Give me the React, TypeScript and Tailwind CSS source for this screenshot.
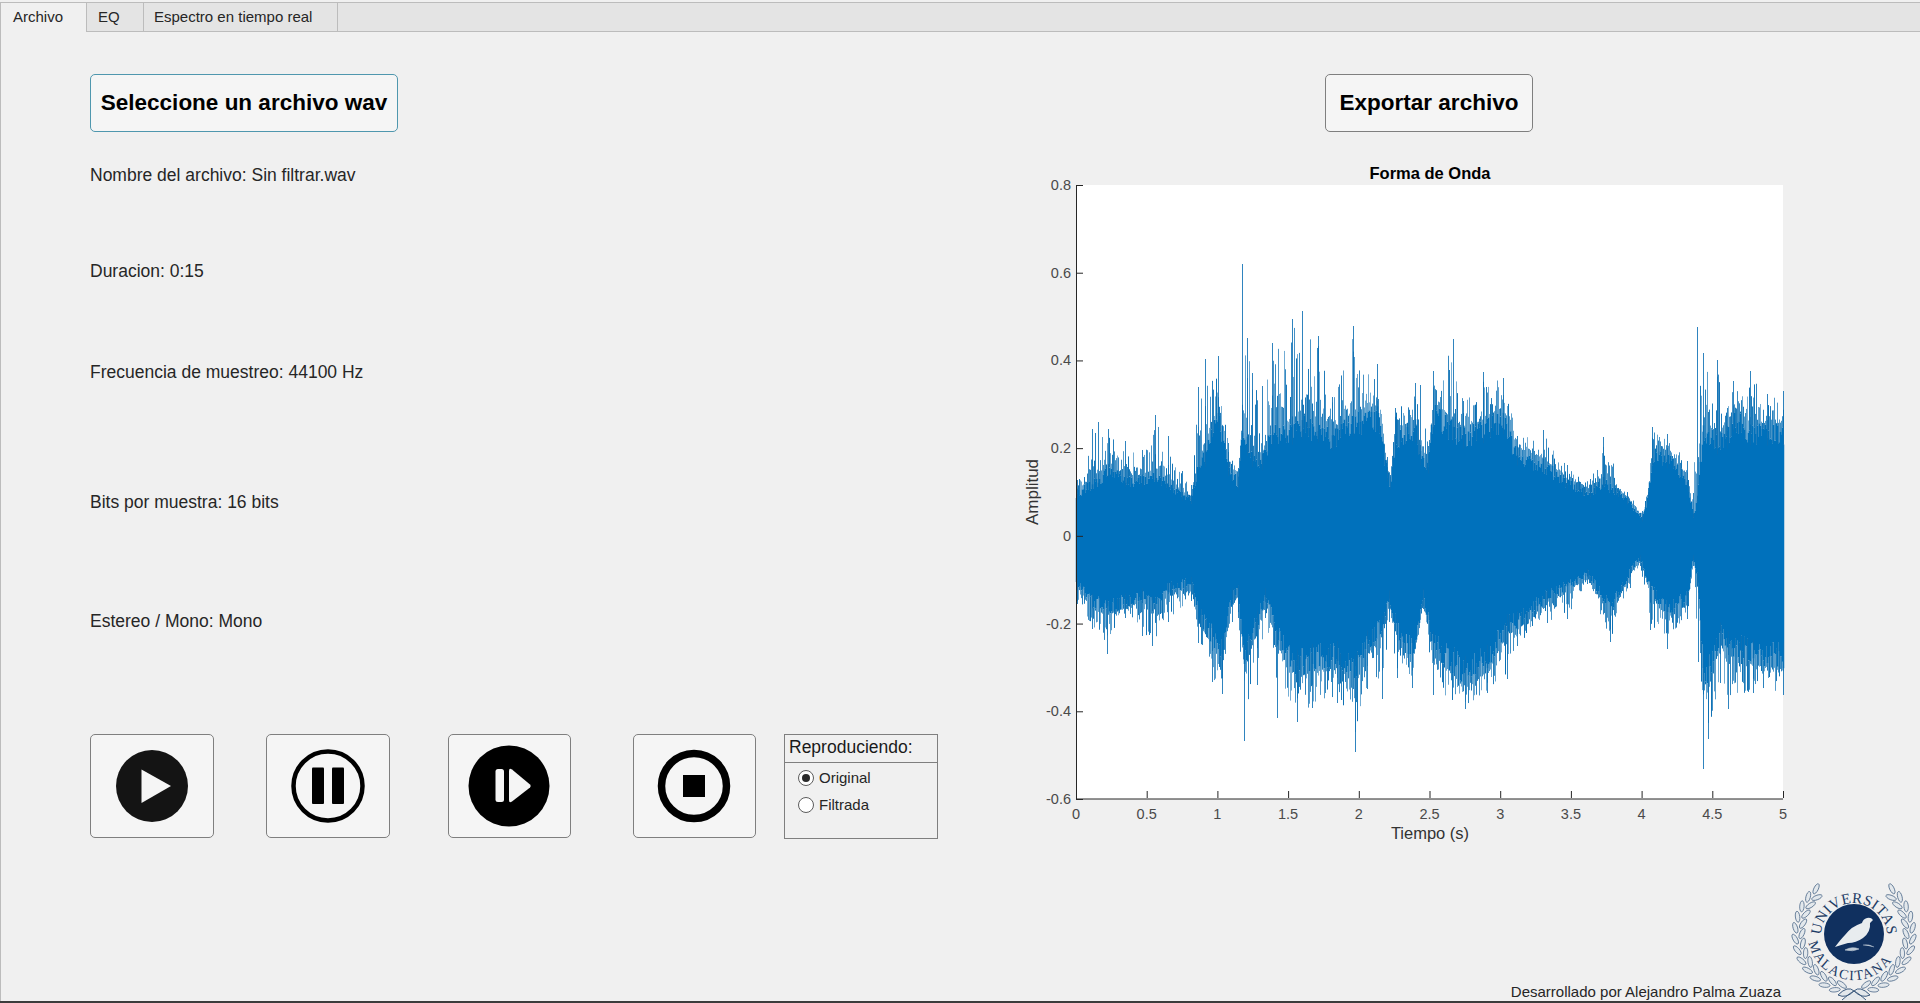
import { useMemo } from "react";

type Point = [number, number, number];

// px from DATA_X, solid edge, tallest spike (px from the zero line)
const upper: Point[] = [
  [0, 40, 50], [5, 47, 56], [20, 58, 107], [26, 61, 114], [36, 72, 107], [53, 61, 95], [70, 61, 86], [83, 68, 121],
  [96, 58, 100], [110, 44, 65], [119, 40, 51], [126, 79, 149], [133, 86, 177], [146, 135, 180], [156, 75, 93],
  [166, 58, 68], [170, 120, 272], [175, 100, 198], [180, 86, 163], [190, 82, 150], [200, 114, 193], [220, 114, 217],
  [230, 121, 225], [246, 117, 200], [260, 107, 139], [281, 124, 210], [305, 131, 172], [315, 68, 79], [318, 58, 61],
  [323, 107, 128], [343, 117, 153], [348, 88, 151], [356, 78, 90], [361, 134, 165], [381, 116, 197], [391, 109, 135],
  [411, 116, 164], [431, 127, 158], [445, 88, 100], [471, 78, 106], [495, 57, 71], [518, 46, 57], [531, 60, 99],
  [555, 39, 44], [570, 18, 25], [576, 43, 48], [580, 88, 109], [595, 85, 102], [615, 60, 75], [621, 22, 43],
  [625, 40, 209], [631, 116, 183], [645, 102, 176], [655, 109, 128], [661, 130, 155], [678, 113, 165], [695, 113, 142],
  [711, 113, 145],
];

const lower: Point[] = [
  [0, 45, 68], [5, 51, 68], [20, 72, 93], [35, 79, 118], [53, 72, 82], [70, 65, 100], [80, 75, 110], [96, 58, 86],
  [119, 51, 65], [126, 86, 107], [140, 110, 146], [150, 125, 158], [160, 65, 86], [166, 61, 82], [172, 135, 205],
  [185, 93, 149], [193, 65, 82], [205, 110, 182], [225, 142, 186], [240, 135, 172], [265, 131, 167], [283, 149, 216],
  [295, 118, 153], [310, 100, 163], [317, 68, 86], [325, 103, 142], [340, 129, 152], [351, 66, 73], [361, 119, 159],
  [393, 150, 173], [415, 136, 157], [435, 98, 143], [445, 94, 110], [475, 66, 87], [495, 55, 83], [515, 41, 48],
  [538, 80, 106], [558, 38, 52], [568, 24, 30], [578, 59, 94], [595, 80, 113], [615, 69, 83], [621, 24, 30],
  [626, 50, 126], [631, 143, 233], [636, 150, 203], [648, 108, 147], [656, 119, 173], [681, 129, 157], [711, 133, 159],
];

const interp = (points: Point[], x: number, i: 1 | 2) => {
  for (let k = 1; k < points.length; k++) {
    if (x <= points[k][0]) {
      const a = points[k - 1];
      const b = points[k];
      return a[i] + ((b[i] - a[i]) * (x - a[0])) / (b[0] - a[0]);
    }
  }
  return points[points.length - 1][i];
};

const DATA_X = 1072;
const AXIS_X = 1076;
const AXIS_W = 707;
const ZERO_Y = 536;

function Waveform() {
  const { solid, spikes } = useMemo(() => {
    let seed = 20417;
    const rand = () => {
      seed = (seed * 16807) % 2147483647;
      return seed / 2147483647;
    };
    let solid = "";
    const spikes: { x: number; y1: number; y2: number; o: number }[] = [];
    for (let px = 4; px <= 711; px++) {
      const x = DATA_X + px + 0.5;
      const sTop = interp(upper, px, 1);
      const sBot = interp(lower, px, 1);
      const top = sTop * (0.8 + rand() * 0.2);
      const bot = sBot * (0.8 + rand() * 0.2);
      solid += `M${x} ${ZERO_Y - top}V${ZERO_Y + bot}`;
      const h1 = sTop + (interp(upper, px, 2) - sTop) * rand() ** 2 * 0.9;
      spikes.push({ x, y1: ZERO_Y - top, y2: ZERO_Y - h1, o: 0.55 + rand() * 0.45 });
      const h2 = sBot + (interp(lower, px, 2) - sBot) * rand() ** 2 * 0.9;
      spikes.push({ x, y1: ZERO_Y + bot, y2: ZERO_Y + h2, o: 0.55 + rand() * 0.45 });
    }
    // the measured peaks go in exactly
    upper.forEach(([px, s, p]) => px >= 4 && spikes.push({ x: DATA_X + px + 0.5, y1: ZERO_Y - s * 0.8, y2: ZERO_Y - p, o: 0.85 }));
    lower.forEach(([px, s, p]) => px >= 4 && spikes.push({ x: DATA_X + px + 0.5, y1: ZERO_Y + s * 0.8, y2: ZERO_Y + p, o: 0.85 }));
    return { solid, spikes };
  }, []);

  return (
    <g>
      <path d={solid} stroke="#0071bc" strokeWidth={1.5} fill="none" />
      {spikes.map((s, i) => (
        <line key={i} x1={s.x} x2={s.x} y1={s.y1} y2={s.y2} stroke="#0a6fb4" strokeOpacity={s.o} strokeWidth={1} />
      ))}
    </g>
  );
}

const yTicks = ["0.8", "0.6", "0.4", "0.2", "0", "-0.2", "-0.4", "-0.6"];
const xTicks = ["0", "0.5", "1", "1.5", "2", "2.5", "3", "3.5", "4", "4.5", "5"];

function Chart() {
  const yAt = (i: number) => 185 + (i * 614) / 7;
  const xAt = (i: number) => AXIS_X + (i * AXIS_W) / 10;
  return (
    <svg viewBox="1020 150 780 700" className="w-[780px] h-[700px] mt-[18px] block shrink-0">
      <rect x={AXIS_X} y={185} width={AXIS_W} height={614} fill="#ffffff" />
      <Waveform />
      <path d={`M${AXIS_X + 0.5} 185V799H${AXIS_X + AXIS_W}`} stroke="#262626" strokeWidth={1} fill="none" />
      {yTicks.map((label, i) => (
        <g key={label}>
          <line x1={AXIS_X} x2={AXIS_X + 7} y1={yAt(i) + 0.5} y2={yAt(i) + 0.5} stroke="#262626" />
          <text x={1071} y={yAt(i) + 5} textAnchor="end" fontSize={14.5} fill="#4a4a4a">{label}</text>
        </g>
      ))}
      {xTicks.map((label, i) => (
        <g key={label}>
          <line x1={xAt(i) + 0.5} x2={xAt(i) + 0.5} y1={798} y2={791} stroke="#262626" />
          <text x={xAt(i)} y={819} textAnchor="middle" fontSize={14.5} fill="#4a4a4a">{label}</text>
        </g>
      ))}
      <text x={1430} y={179} textAnchor="middle" fontSize={16.5} fontWeight={700} fill="#000000">Forma de Onda</text>
      <text x={1430} y={839} textAnchor="middle" fontSize={16.5} fill="#333333">Tiempo (s)</text>
      <text transform="translate(1038 492) rotate(-90)" textAnchor="middle" fontSize={17} fill="#333333">Amplitud</text>
    </svg>
  );
}

function PlayIcon() {
  return (
    <svg viewBox="0 0 80 80" className="w-20 h-20">
      <circle cx="40" cy="40" r="36" fill="#141414" />
      <path d="M29.5 23.5L59 40L29.5 57Z" fill="#f5f5f5" />
    </svg>
  );
}

function PauseIcon() {
  return (
    <svg viewBox="0 0 80 80" className="w-20 h-20">
      <circle cx="40" cy="40" r="34.5" fill="none" stroke="#000000" strokeWidth="4.5" />
      <rect x="24" y="21.5" width="12" height="36.5" rx="1" fill="#000000" />
      <rect x="44" y="21.5" width="12" height="36.5" rx="1" fill="#000000" />
    </svg>
  );
}

function StepIcon() {
  return (
    <svg viewBox="0 0 84 84" className="w-[84px] h-[84px]">
      <circle cx="42" cy="42" r="40.5" fill="#000000" />
      <rect x="28.5" y="25" width="8.5" height="33" rx="2.5" fill="#f5f5f5" />
      <path d="M42 27L42 56Q42 59.5 45 57.5L63 43.5Q64.5 42 63 40.5L45 25.5Q42 23.5 42 27Z" fill="#f5f5f5" />
    </svg>
  );
}

function StopIcon() {
  return (
    <svg viewBox="0 0 80 80" className="w-20 h-20">
      <circle cx="40" cy="40" r="32.5" fill="none" stroke="#000000" strokeWidth="7.5" />
      <rect x="29" y="29" width="22" height="22" fill="#000000" />
    </svg>
  );
}

function Radio({ label, checked }: { label: string; checked?: boolean }) {
  return (
    <div className="flex items-center h-[27px] pl-[13px] gap-[5px]">
      <span className="w-4 h-4 rounded-full border border-[#5c5c5c] bg-white flex items-center justify-center">
        {checked && <span className="w-2 h-2 rounded-full bg-[#2a2a2a]" />}
      </span>
      <span className="text-[15px] text-[#262626] leading-none">{label}</span>
    </div>
  );
}

function Laurel({ side }: { side: 1 | -1 }) {
  const leaves = [];
  let n = 0;
  for (let a = 40; a <= 172; a += 5.5) {
    const rad = (a * Math.PI) / 180;
    const flip = n % 2 === 0 ? 1 : -1;
    const r = 55.5 + flip * 3.5;
    const cx = 64 + side * r * Math.sin(rad);
    const cy = 61 - r * Math.cos(rad);
    const rot = side * (a + flip * 24);
    leaves.push(
      <ellipse key={a} cx={cx} cy={cy} rx="5.5" ry="2.2" transform={`rotate(${rot} ${cx} ${cy})`} fill="#e3e8ec" stroke="#3f5d80" strokeWidth="0.7" />,
    );
    n++;
  }
  return <g>{leaves}</g>;
}

function Logo() {
  return (
    <svg viewBox="0 0 130 128" className="w-[130px] h-[128px] shrink-0 block font-['Liberation_Serif',serif]">
      <Laurel side={-1} />
      <Laurel side={1} />
      <path d="M48 122Q58 112 64 118Q70 112 80 122M52 127Q60 120 64 118Q68 120 76 127M48 122Q56 126 64 118Q72 126 80 122" fill="#e3e8ec" stroke="#3f5d80" strokeWidth="1" />
      <circle cx="64" cy="61" r="30" fill="#10305f" />
      <path id="logo-top" d="M31 63A33 33 0 1 1 97 63" fill="none" />
      <path id="logo-bottom" d="M18 63A46 46 0 0 0 105.7 80.4" fill="none" />
      <text fontSize="15" fill="#1d3c66" letterSpacing="0.4">
        <textPath href="#logo-top" startOffset="50%" textAnchor="middle">UNIVERSITAS</textPath>
      </text>
      <text fontSize="14" fill="#1d3c66" letterSpacing="1.6">
        <textPath href="#logo-bottom" startOffset="50%" textAnchor="middle">MALACITANA</textPath>
      </text>
      <path d="M45 74Q51 66 55 62Q62 53 72 50Q73 46 77 45Q81 44 83 47L80 50Q81 59 73 65Q66 70 58 70Q51 72 45 74Z" fill="#e8ecef" />
      <path d="M55 77Q62 73 69 76Q63 79 55 77ZM73 72Q79 71 84 74" fill="#bcc8d4" stroke="#bcc8d4" strokeWidth="0.6" />
    </svg>
  );
}

const buttonBase = "border border-[#7f7f7f] bg-[#f5f5f5] rounded-[5px] flex items-center justify-center shrink-0";

export default function App() {
  return (
    <div className="w-[1920px] h-[1003px] overflow-hidden flex flex-col bg-[#f0f0f0] font-['Liberation_Sans',Arial,sans-serif] text-[#262626] border-b-2 border-[#3c3c3c]">
      <div className="h-[32px] pt-[2px] shrink-0">
        <div className="h-[30px] flex border-t border-b border-[#bcbcbc] bg-[#e4e4e4] text-[15px]">
          <div className="w-[87px] -mb-px pl-3 bg-[#f0f0f0] border-r border-l border-[#bcbcbc] flex items-center">Archivo</div>
          <div className="w-[57px] pl-[11px] border-r border-[#bcbcbc] flex items-center">EQ</div>
          <div className="w-[194px] pl-[10px] border-r border-[#bcbcbc] flex items-center">Espectro en tiempo real</div>
        </div>
      </div>

      <div className="flex-1 min-h-0 flex border-l border-[#bcbcbc]">
        <div className="w-[1019px] pl-[89px] pt-[42px] shrink-0 text-[17.5px] leading-6">
          <button className="w-[308px] h-[58px] border border-[#4f97ae] bg-[#f5f5f5] rounded-[5px] text-[22.5px] font-bold text-black">
            Seleccione un archivo wav
          </button>
          <p className="mt-[31px]">Nombre del archivo: Sin filtrar.wav</p>
          <p className="mt-[72px]">Duracion: 0:15</p>
          <p className="mt-[77px]">Frecuencia de muestreo: 44100 Hz</p>
          <p className="mt-[106px]">Bits por muestra: 16 bits</p>
          <p className="mt-[95px]">Estereo / Mono: Mono</p>

          <div className="mt-[101px] flex items-start">
            <div className={`${buttonBase} w-[124px] h-[104px]`}><PlayIcon /></div>
            <div className={`${buttonBase} w-[124px] h-[104px] ml-[52px]`}><PauseIcon /></div>
            <div className={`${buttonBase} w-[123px] h-[104px] ml-[58px] pr-0.5`}><StepIcon /></div>
            <div className={`${buttonBase} w-[123px] h-[104px] ml-[62px] pr-px`}><StopIcon /></div>
            <div className="w-[154px] h-[105px] ml-[28px] border border-[#7f7f7f] shrink-0">
              <div className="h-[28px] pl-[4px] border-b border-[#7f7f7f] text-[17.5px] leading-[25px] text-[#1a1a1a]">Reproduciendo:</div>
              <div className="pt-px">
                <Radio label="Original" checked />
                <Radio label="Filtrada" />
              </div>
            </div>
          </div>
        </div>

        <div className="flex-1 min-w-0 flex flex-col pt-[42px]">
          <button className="w-[208px] h-[58px] ml-[305px] border border-[#7f7f7f] bg-[#f5f5f5] rounded-[5px] text-[22.5px] font-bold text-black shrink-0">
            Exportar archivo
          </button>
          <Chart />
          <div className="mt-auto flex justify-end items-end">
            <span className="text-[15px] leading-none text-[#262626] pb-[2px] mr-[9px]">Desarrollado por Alejandro Palma Zuaza</span>
            <Logo />
          </div>
        </div>
      </div>
    </div>
  );
}
